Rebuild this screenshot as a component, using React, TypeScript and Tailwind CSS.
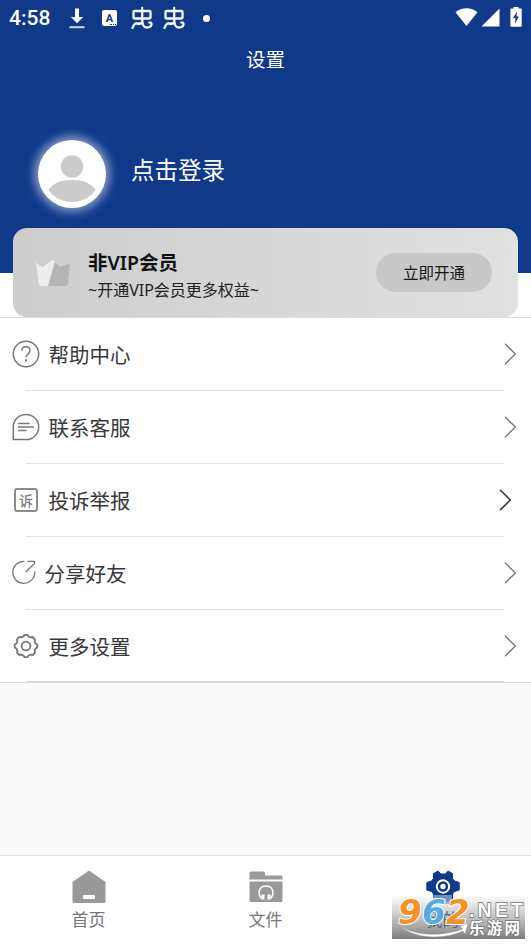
import type { ReactNode } from "react";

const menuItems = [
  { id: "help", label: "帮助中心", icon: <HelpIcon /> },
  { id: "contact", label: "联系客服", icon: <ChatIcon /> },
  { id: "report", label: "投诉举报", icon: <ReportIcon /> },
  { id: "share", label: "分享好友", icon: <ShareIcon /> },
  { id: "more", label: "更多设置", icon: <GearIcon /> },
];

function HelpIcon() {
  return (
    <svg className="w-7 h-7" viewBox="0 0 28 28" fill="none" stroke="#777" strokeWidth="1.5">
      <circle cx="14" cy="14" r="12.7" />
      <path d="M9.8 10.8c0-2.4 1.7-4 4.1-4s4.1 1.5 4.1 3.8c0 3.2-4 3.5-4 7" />
      <path d="M14 19.2v2.2" strokeWidth="2" />
    </svg>
  );
}

function ChatIcon() {
  return (
    <svg className="w-7 h-7" viewBox="0 0 28 28" fill="none" stroke="#777" strokeWidth="1.5">
      <path d="M1.3 26.6V14A12.7 12.6 0 1 1 14 26.6Z" />
      <path d="M6 10.4h11.6M6 14h16M6 17.6h8.5" />
    </svg>
  );
}

function ReportIcon() {
  return (
    <span className="flex w-6 h-6 ml-[2px] mr-[2px] items-center justify-center rounded-[3px] border-2 border-[#8c8c8c] text-[14px] leading-none font-medium text-[#808080]">
      诉
    </span>
  );
}

function ShareIcon() {
  return (
    <svg className="w-6 h-7" viewBox="0 0 24 28" fill="none" stroke="#777" strokeWidth="1.3">
      <path d="M12.300 2.300A11 11 0 1 0 22.800 12.500" />
      <path d="M15.500 2.300h7v2.200L13.800 13" />
    </svg>
  );
}

function GearIcon() {
  return (
    <svg className="w-7 h-7" viewBox="0 0 28 28" fill="none" stroke="#777" strokeWidth="1.8" strokeLinejoin="round">
      <path d="M11.500 4.500 12.600 2.800h2.800l1.100 1.700 2.200.9 2-.4 2.300 2.300-.4 2 .9 2.200 1.800 1.100v2.800l-1.800 1.100-.9 2.200.4 2-2.300 2.300-2-.4-2.200.9-1.100 1.700h-2.800l-1.100-1.700-2.200-.9-2 .4-2.300-2.300.4-2-.9-2.200-1.800-1.100v-2.800l1.800-1.100.9-2.200-.4-2 2.300-2.300 2 .4Z" />
      <circle cx="14" cy="14" r="4.400" />
    </svg>
  );
}

function BugIcon() {
  return (
    <svg className="w-[22px] h-6" viewBox="0 0 22 24" fill="none" stroke="#f4f8ff" strokeWidth="2.300" strokeLinecap="round" strokeLinejoin="round">
      <rect x="2.500" y="5" width="17" height="7.500" rx="1" />
      <path d="M11.200 2v11.500c0 5.500 1.300 8 4.500 8 2.900 0 4.800-1.500 4.800-3.500 0-1.300-1-1.900-2.200-1.500" />
      <path d="M1.500 22c1.300-4 3-5 4.800-4.300 1.900.8 3.200.2 4.500-1M4.500 17.300h6.500" />
    </svg>
  );
}

function StatusBar() {
  return (
    <div className="flex h-9 items-center justify-between text-white">
      <div className="flex items-center">
        <span className="ml-[9px] w-[60px] text-[21px] font-medium leading-6 font-[Roboto,sans-serif]">4:58</span>
        <svg className="w-4 h-6" viewBox="0 0 16 24" fill="#fff">
          <path d="M6 2.5h4V11h4.2L8 17.2 1.8 11H6Z" />
          <path d="M.5 20.2h15v2H.5z" opacity=".8" />
        </svg>
        <span className="relative ml-[17px] flex w-[15px] h-4 items-center justify-center rounded-[2px] bg-white text-[11px] leading-none font-bold text-[#10398a] font-[Roboto,sans-serif]">
          A
          <i className="absolute right-[1px] bottom-[1px] w-[6px] border-b border-dotted border-[#10398a]" />
        </span>
        <span className="ml-[14px] flex gap-[10px]">
          <BugIcon />
          <BugIcon />
        </span>
        <span className="ml-[18px] w-[7px] h-[7px] rounded-full bg-white" />
      </div>
      <div className="flex items-center pr-[9px]">
        <svg className="w-[23px] h-5" viewBox="0 0 23 20" fill="#fff">
          <path d="M.5 4.200C6.8-1.100 16.200-1.100 22.500 4.200L11.500 18Z" />
        </svg>
        <svg className="ml-[3px] w-[19px] h-5" viewBox="0 0 19 20" fill="#fff">
          <path d="M18.500.5v18H.5Z" />
        </svg>
        <svg className="ml-[10px] mb-[2px] w-3 h-5" viewBox="0 0 12 20">
          <path d="M3.500 0h5v1.500H11q.7 0 .7.700V19q0 .8-.8.8H1.200q-.8 0-.8-.8V2.200q0-.7.700-.7h2.400Z" fill="#fff" />
          <path d="M7 4.500 3 11h2.500L5 16.500 9 9.500H6.500Z" fill="#10398a" />
        </svg>
      </div>
    </div>
  );
}

function Avatar() {
  return (
    <svg className="w-[68px] h-[68px] rounded-full bg-white shadow-[0_0_10px_4px_rgba(255,255,255,0.5)]" viewBox="0 0 68 68" fill="#cbcbcb">
      <circle cx="34" cy="26.500" r="11.200" />
      <path d="M10.500 50C15 43 23 40 34 40s19 3 23.500 10C52 58 43 62 34 62S16 58 10.500 50Z" />
    </svg>
  );
}

function VipCard() {
  return (
    <div className="relative z-10 mx-[13px] -mt-[45px] flex h-[89px] items-center rounded-[14px] bg-linear-to-r from-[#cdcdcd] to-[#e1e1e1]">
      <svg className="ml-[22px] w-9 h-7" viewBox="0 0 36 28">
        <path d="M1 3.500 7.500 8.500 17 1 21 3 14 27H6q-2 0-2.300-2Z" fill="#ededed" />
        <path d="M20 2.500 24.500 8 35 4.500 33 24.500q-.3 2.500-2.500 2.500H13Z" fill="#b5b5b5" />
      </svg>
      <div className="ml-[17px] mt-[6px] flex flex-col font-['Noto_Sans','Noto_Sans_CJK_SC',sans-serif]">
        <h2 className="text-[19.5px] leading-[29px] font-semibold text-[#111]">非VIP会员</h2>
        <p className="text-[16px] leading-[27px] text-[#222]">~开通VIP会员更多权益~</p>
      </div>
      <button className="ml-auto mr-[26px] h-[39px] w-[116px] rounded-full bg-[#c8c8c8] text-[15.5px] text-[#181818]">
        立即开通
      </button>
    </div>
  );
}

function MenuRow({ label, icon, id, last }: { label: string; icon: ReactNode; id: string; last: boolean }) {
  return (
    <div className={`flex flex-col ${last ? "h-[72px]" : "h-[73px]"}`}>
      <div className="flex flex-1 items-center pl-3">
        {icon}
        <span className="ml-[8.5px] text-[20.5px] leading-8 text-[#383838]">{label}</span>
        <svg
          className={`ml-auto w-[14px] h-[22px] ${id === "report" ? "mr-[19px]" : "mr-[14px]"}`}
          viewBox="0 0 14 22"
          fill="none"
          stroke={id === "report" ? "#444" : "#777"}
          strokeWidth={id === "report" ? 1.7 : 1.3}
        >
          <path d="m2 .8 10.300 10.200L2 21.200" />
        </svg>
      </div>
      <div className={`ml-[26px] mr-[27px] h-px ${last ? "bg-[#d8d8d8]" : "bg-[#e2e2e2]"}`} />
    </div>
  );
}

function NavItem({ label, icon, active }: { label: string; icon: ReactNode; active?: boolean }) {
  return (
    <div className="flex flex-1 flex-col items-center pt-[13px]">
      {icon}
      <span className={`mt-[2px] text-[17px] leading-[26px] ${active ? "text-[#10398a]" : "text-[#777]"}`}>{label}</span>
    </div>
  );
}

function Watermark() {
  return (
    <svg className="absolute left-[392px] top-[895px] w-[133px] h-11 overflow-visible" viewBox="0 0 133 44">
      <defs>
        <linearGradient id="shade" x2="0" y2="1">
          <stop offset="0" stopColor="#888" stopOpacity="0" />
          <stop offset=".5" stopColor="#888" stopOpacity=".5" />
          <stop offset="1" stopColor="#6e6e6e" stopOpacity=".9" />
        </linearGradient>
      </defs>
      <rect width="133" height="44" fill="url(#shade)" />
      <rect x="41" y="0" width="19" height="9" fill="#8c9dce" opacity=".8" />
      <g fontFamily="DejaVu Sans, sans-serif" fontWeight="700" fontStyle="italic" fontSize="34" stroke="#fff" strokeWidth="2" strokeLinejoin="round" paintOrder="stroke">
        <text x="6" y="29" fill="#f49323">9</text>
        <text x="30" y="29" fill="#54ace2">6</text>
        <text x="54" y="29" fill="#f49323">2</text>
      </g>
      <path d="M8 31C25 42 53 41 71 34L68 31.500 76 28 73 39 71 36C51 45 23 44 8 31Z" fill="#fff" stroke="#999" strokeWidth=".4" />
      <g fill="#fff" stroke="#777" strokeWidth="1.500" paintOrder="stroke" fontWeight="700">
        <text x="77" y="22" fontFamily="Liberation Sans, sans-serif" fontSize="19.500" textLength="54" lengthAdjust="spacing">.NET</text>
        <text x="77" y="39" fontFamily="Noto Sans CJK SC, sans-serif" fontSize="15.500" textLength="51">乐游网</text>
      </g>
    </svg>
  );
}

export default function App() {
  return (
    <div className="relative flex h-[945px] w-[531px] flex-col overflow-hidden bg-[#fafafa] font-['Noto_Sans_CJK_SC',sans-serif]">
      <header className="h-[273px] shrink-0 bg-[#10398a] text-white">
        <StatusBar />
        <h1 className="mt-[7px] text-center text-[19.5px] leading-8">设置</h1>
        <div className="mt-[65px] flex pl-[38px]">
          <Avatar />
          <span className="ml-[25px] mt-[11px] text-[23.5px] leading-9">点击登录</span>
        </div>
      </header>

      <section className="border-b border-[#dedede] bg-white">
        <VipCard />
        <div className="border-t border-[#dedede]">
          {menuItems.map((item, index) => (
            <MenuRow key={item.id} {...item} last={index === menuItems.length - 1} />
          ))}
        </div>
      </section>

      <nav className="mt-auto flex h-[90px] border-t border-[#e2e2e2] bg-white">
        <NavItem
          label="首页"
          icon={
            <svg className="w-[34px] h-[35px]" viewBox="0 0 34 35">
              <path d="M17 1.500 33.500 13v19.500q0 1.500-1.500 1.500H2q-1.500 0-1.500-1.500V13Z" fill="#999" />
              <rect x="11" y="26" width="12" height="4" rx="1" fill="#fff" />
            </svg>
          }
        />
        <NavItem
          label="文件"
          icon={
            <svg className="w-[34px] h-[35px]" viewBox="0 0 34 35">
              <path d="M.5 10.500V4q0-1.500 1.500-1.500h12.500q1.500 0 1.500 1.500v2.500h16q1.500 0 1.500 1.500v2.500ZM.5 12.500h33V31.500q0 1.500-1.500 1.500H2q-1.500 0-1.500-1.500Z" fill="#999" />
              <path d="M12.500 29.500C8 24 10 17 17 17s9 7 4.500 12.500" fill="none" stroke="#fff" strokeWidth="1.500" />
              <path d="M12.500 25.500h3v5h-3zM18.500 25.500h3v5h-3z" fill="#fff" />
            </svg>
          }
        />
        <NavItem
          active
          label="我的"
          icon={
            <svg className="w-[34px] h-[35px]" viewBox="0 0 34 35">
              <path
                d="M7.500 4.500 12 2 15 5h4.500L22 2 26.500 4.500 26.500 9.500 28.500 12 33.200 13.500V21L28.500 22.500 26.500 25 26.500 30 22 32.800 19.500 30H15L12 32.800 7.500 30 7.500 25 5.500 22.500 .8 21V13.500L5.500 12 7.500 9.500Z"
                fill="#10398a"
                stroke="#10398a"
                strokeLinejoin="round"
              />
              <circle cx="17" cy="17.500" r="6.200" fill="#10398a" stroke="#fff" strokeWidth="2" />
              <circle cx="17" cy="17.500" r="2.700" fill="#fff" />
            </svg>
          }
        />
      </nav>
      <Watermark />
    </div>
  );
}
